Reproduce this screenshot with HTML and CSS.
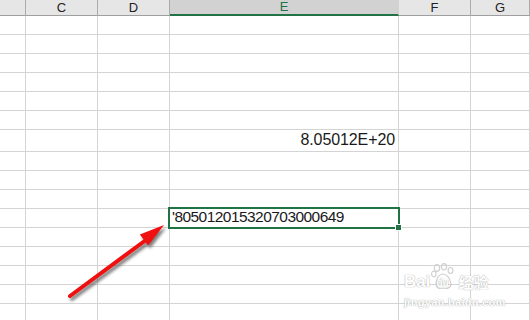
FILE: index.html
```html
<!DOCTYPE html>
<html lang="zh-CN">
<head>
    <meta charset="UTF-8">
    <meta name="viewport" content="width=device-width, initial-scale=1.0">
    <title>Sheet</title>
    <link rel="stylesheet" href="styles.css">
</head>
<body>
    <div class="sheet">
        <!-- column headers -->
        <div class="hd"></div>
        <div class="hd">C</div>
        <div class="hd">D</div>
        <div class="hd hd-active">E</div>
        <div class="hd">F</div>
        <div class="hd">G</div>

        <!-- row 1 -->
        <div class="c"></div><div class="c"></div><div class="c"></div><div class="c"></div><div class="c"></div><div class="c"></div>
        <!-- row 2 -->
        <div class="c"></div><div class="c"></div><div class="c"></div><div class="c"></div><div class="c"></div><div class="c"></div>
        <!-- row 3 -->
        <div class="c"></div><div class="c"></div><div class="c"></div><div class="c"></div><div class="c"></div><div class="c"></div>
        <!-- row 4 -->
        <div class="c"></div><div class="c"></div><div class="c"></div><div class="c"></div><div class="c"></div><div class="c"></div>
        <!-- row 5 -->
        <div class="c"></div><div class="c"></div><div class="c"></div><div class="c"></div><div class="c"></div><div class="c"></div>
        <!-- row 6 -->
        <div class="c"></div><div class="c"></div><div class="c"></div><div class="c"></div><div class="c"></div><div class="c"></div>
        <!-- row 7 (taller, has the number) -->
        <div class="c"></div><div class="c"></div><div class="c"></div><div class="c num">8.05012E+20</div><div class="c"></div><div class="c"></div>
        <!-- row 8 -->
        <div class="c"></div><div class="c"></div><div class="c"></div><div class="c"></div><div class="c"></div><div class="c"></div>
        <!-- row 9 -->
        <div class="c"></div><div class="c"></div><div class="c"></div><div class="c"></div><div class="c"></div><div class="c"></div>
        <!-- row 10 -->
        <div class="c"></div><div class="c"></div><div class="c"></div><div class="c"></div><div class="c"></div><div class="c"></div>
        <!-- row 11 (selected cell) -->
        <div class="c"></div><div class="c"></div><div class="c"></div><div class="c txt selected">'805012015320703000649<span class="handle"></span></div><div class="c"></div><div class="c"></div>
        <!-- row 12 -->
        <div class="c"></div><div class="c"></div><div class="c"></div><div class="c"></div><div class="c"></div><div class="c"></div>
        <!-- row 13 -->
        <div class="c"></div><div class="c"></div><div class="c"></div><div class="c"></div><div class="c"></div><div class="c"></div>
        <!-- row 14 -->
        <div class="c"></div><div class="c"></div><div class="c"></div><div class="c"></div><div class="c"></div><div class="c"></div>
        <!-- row 15 -->
        <div class="c"></div><div class="c"></div><div class="c"></div><div class="c"></div><div class="c"></div><div class="c"></div>
        <!-- row 16 -->
        <div class="c"></div><div class="c"></div><div class="c"></div><div class="c"></div><div class="c"></div><div class="c"></div>
    </div>

    <!-- red arrow pointing at the cell -->
    <svg class="arrow" width="530" height="320" viewBox="0 0 530 320">
        <defs>
            <filter id="blur" x="-20%" y="-20%" width="140%" height="140%">
                <feGaussianBlur stdDeviation="1.6"/>
            </filter>
        </defs>
        <g transform="translate(2,3)" fill="#555" stroke="#555" opacity="0.75" filter="url(#blur)">
            <line x1="70" y1="296" x2="150" y2="237" stroke-width="4" stroke-linecap="round"/>
            <polygon points="164,225 139.8,234.4 148.2,245.6" stroke="none"/>
        </g>
        <line x1="70" y1="296" x2="150" y2="237" stroke="#f01010" stroke-width="4" stroke-linecap="round"/>
        <polygon points="164,225 139.8,234.4 148.2,245.6" fill="#f01010"/>
    </svg>

    <!-- watermark -->
    <div class="mark">
        <div class="mark-top">
            <span class="mark-bai">Bai</span>
            <span class="mark-paw">
                <svg width="24" height="27" viewBox="0 0 24 27">
                    <g fill="none" stroke="#d0d0d0" stroke-width="1.2">
                        <ellipse cx="6" cy="5" rx="2.6" ry="3.4"/>
                        <ellipse cx="13" cy="3.8" rx="2.6" ry="3.2"/>
                        <ellipse cx="19.5" cy="7.5" rx="2.4" ry="3"/>
                        <ellipse cx="2.8" cy="11" rx="2.2" ry="2.8"/>
                        <path d="M5 21 C5 14 9 11 12 11 C15 11 19 14 20 21 C20 25 16 26 12 25 C8 26 5 25 5 21 Z"/>
                    </g>
                </svg>
                <span class="mark-du">du</span>
            </span>
            <span class="mark-jy">经验</span>
        </div>
        <div class="mark-url">jingyan.baidu.com</div>
    </div>
</body>
</html>
```

FILE: styles.css
```css
body {
    margin: 0;
    width: 530px;
    height: 320px;
    overflow: hidden;
    background: #ffffff;
    font-family: "Liberation Sans", Arial, sans-serif;
    position: relative;
}
.sheet {
    display: grid;
    grid-template-columns: 26px 72px 72px 229px 72px 59px;
    grid-template-rows: 16px repeat(6, 19px) 22px repeat(9, 19px);
}
.hd {
    background: #e6e6e6;
    border-right: 1px solid #ababab;
    border-bottom: 1px solid #9f9f9f;
    box-sizing: border-box;
    font-size: 13px;
    line-height: 15px;
    text-align: center;
    color: #222;
}
.hd-active {
    background: #d2d2d2;
    color: #217346;
    border-right-color: #d2d2d2;
    border-bottom: 2px solid #217346;
    line-height: 14px;
}
.c {
    border-right: 1px solid #d4d4d4;
    border-bottom: 1px solid #d4d4d4;
    box-sizing: border-box;
    font-size: 15px;
    color: #1a1a1a;
    display: flex;
    align-items: flex-end;
    white-space: nowrap;
}
.num {
    justify-content: flex-end;
    padding-right: 3px;
    padding-bottom: 2px;
    font-size: 16px;
    letter-spacing: -0.1px;
}
.txt {
    padding-left: 2px;
    padding-bottom: 1px;
    font-size: 15.5px;
    letter-spacing: -0.55px;
}
.selected {
    position: relative;
}
.selected::after {
    content: "";
    position: absolute;
    top: -2px;
    left: -2px;
    right: -2px;
    bottom: -2px;
    border: 2px solid #217346;
}
.handle {
    position: absolute;
    right: -4px;
    bottom: -4px;
    width: 5px;
    height: 5px;
    background: #217346;
    border: 1px solid #ffffff;
    z-index: 1;
}
.arrow {
    position: absolute;
    left: 0;
    top: 0;
    pointer-events: none;
}
.mark {
    position: absolute;
    left: 404px;
    top: 262px;
    width: 100px;
    color: #ffffff;
    text-shadow: 0 0 1px #a8a8a8, 0 0 1px #c0c0c0;
    pointer-events: none;
}
.mark-top {
    display: flex;
    align-items: flex-end;
    height: 28px;
}
.mark-bai {
    font-size: 17px;
    font-weight: bold;
    line-height: 15px;
    margin-bottom: 1px;
}
.mark-paw {
    position: relative;
    width: 24px;
    height: 27px;
    margin-left: 1px;
}
.mark-paw svg {
    display: block;
}
.mark-du {
    position: absolute;
    left: 5px;
    bottom: 2px;
    font-size: 10px;
    font-weight: bold;
    line-height: 10px;
}
.mark-jy {
    font-family: "Noto Sans CJK SC", sans-serif;
    font-size: 15px;
    font-weight: bold;
    line-height: 17px;
    margin-left: 3px;
}
.mark-url {
    font-size: 11px;
    font-weight: bold;
    margin-top: 6px;
    letter-spacing: 0.3px;
}
```
